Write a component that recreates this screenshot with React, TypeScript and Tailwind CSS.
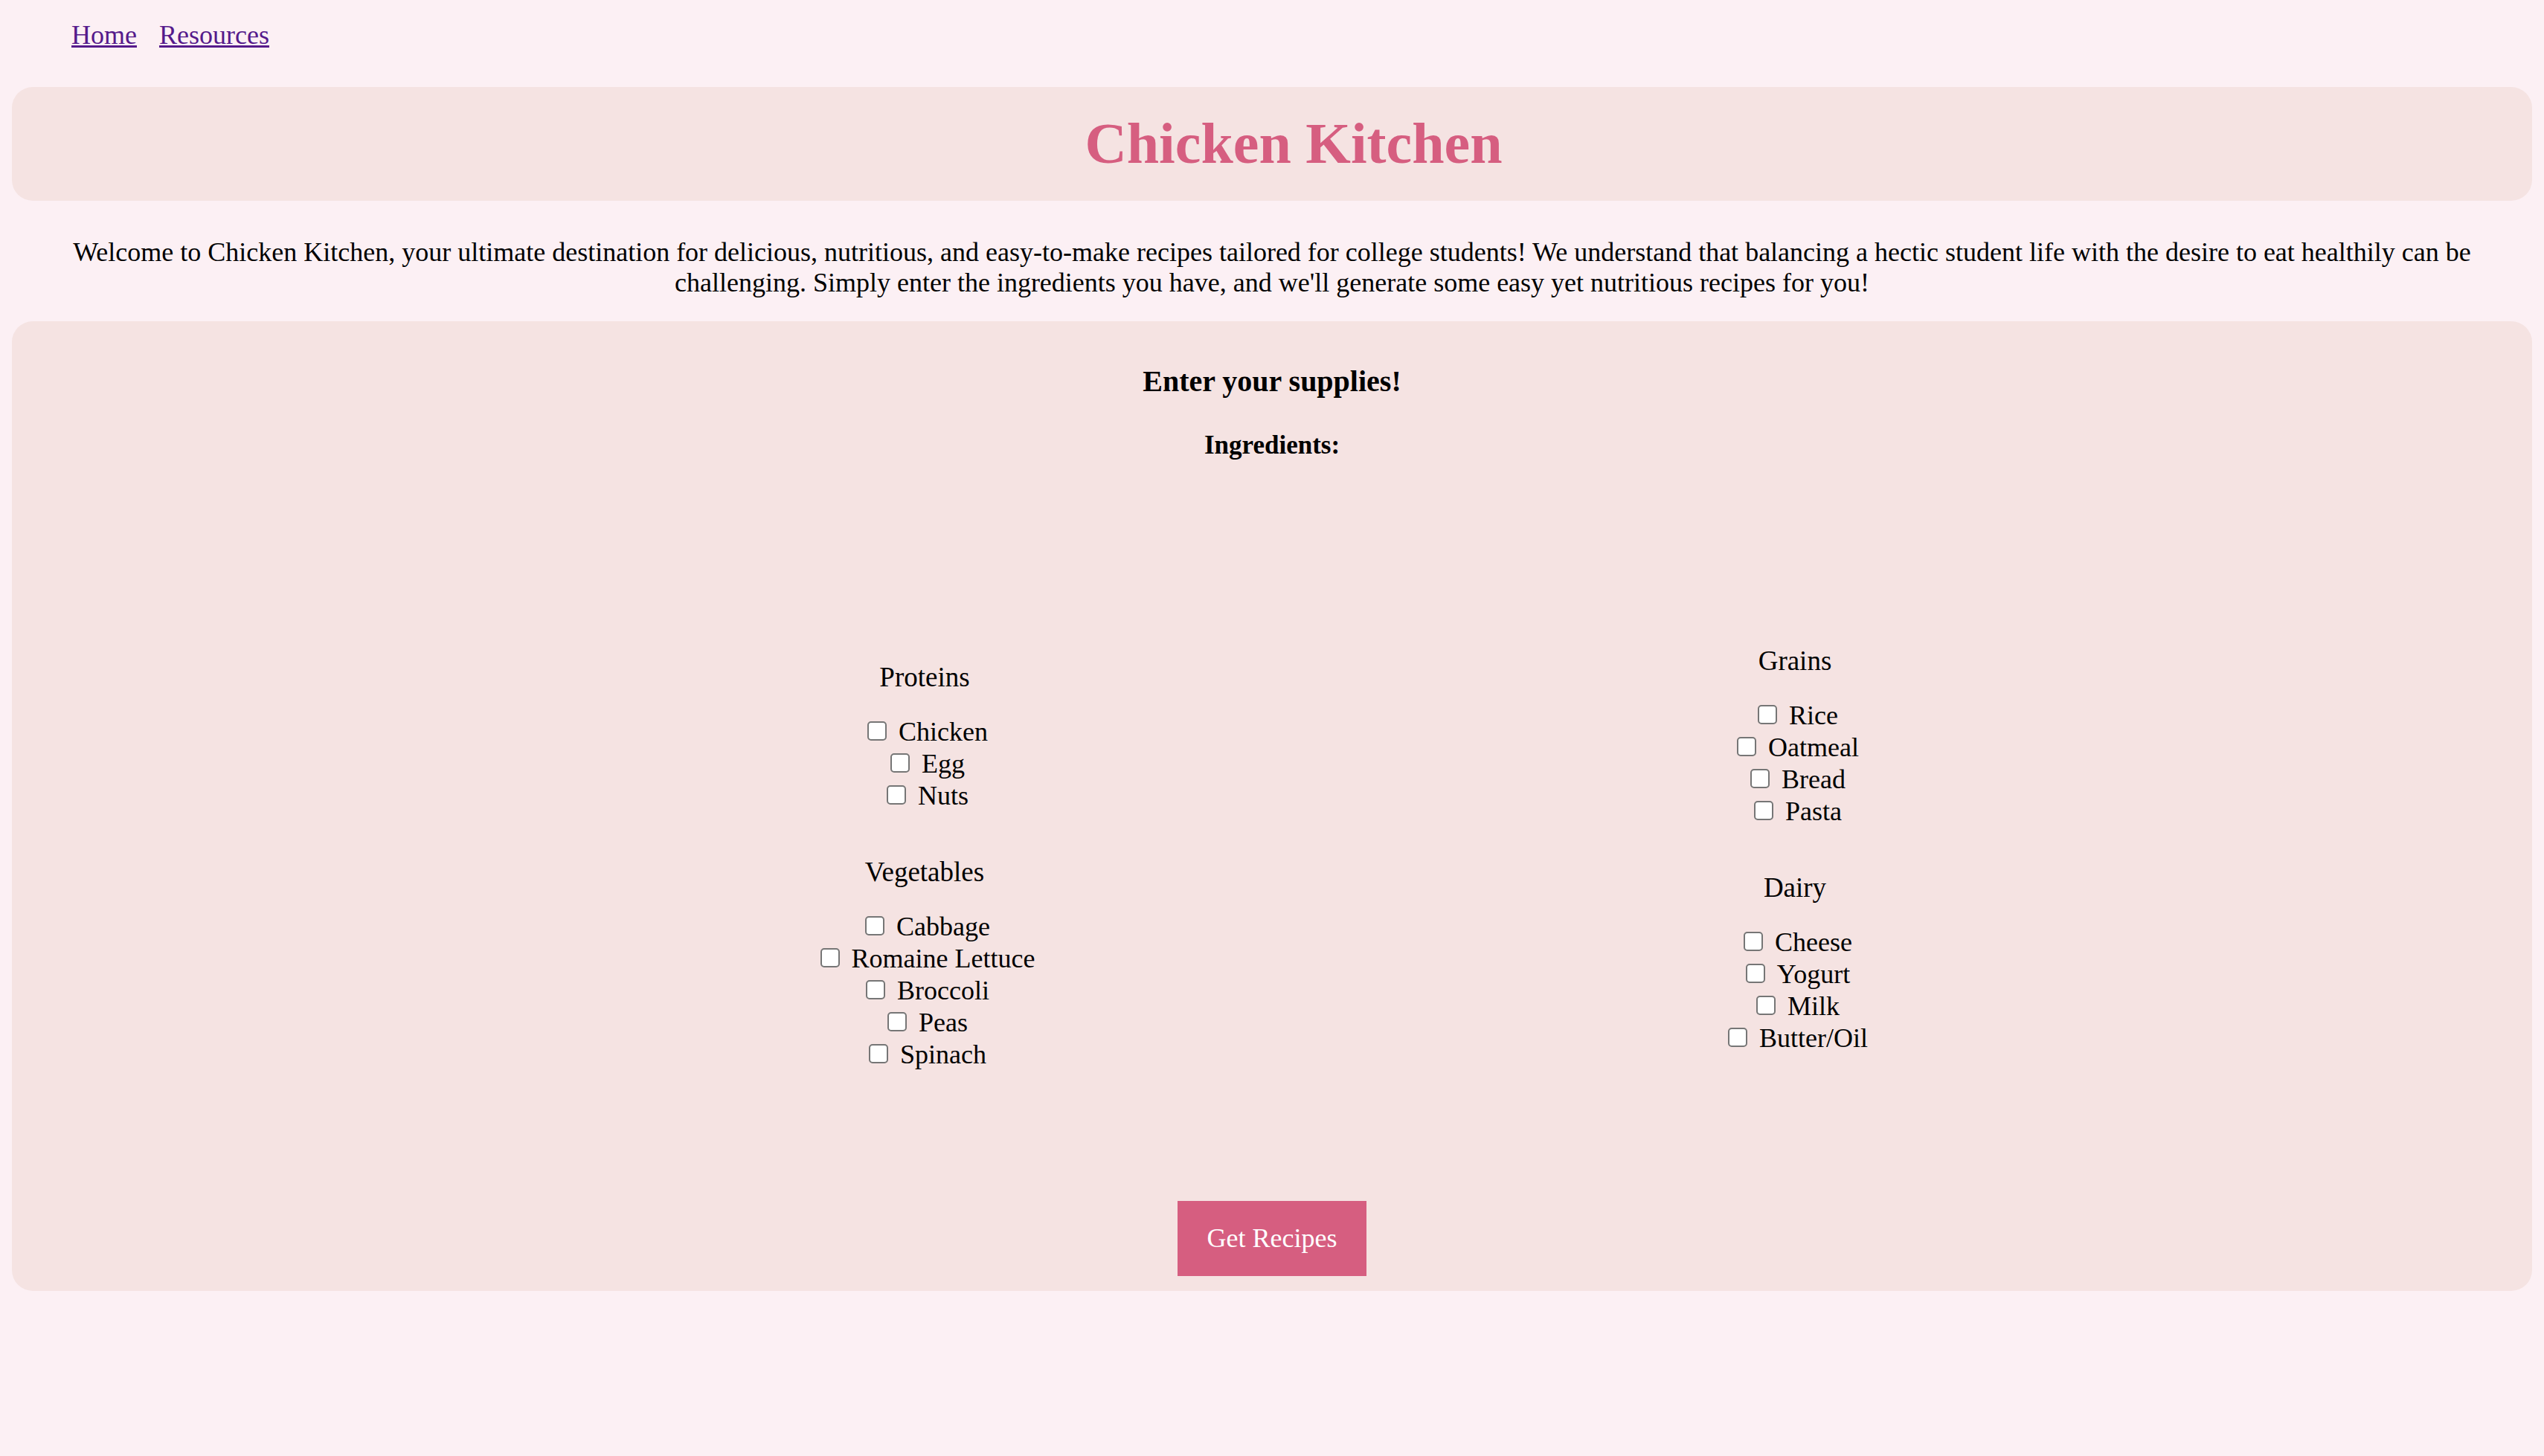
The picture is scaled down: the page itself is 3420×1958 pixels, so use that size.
const groupsLeft = [
  { title: "Proteins", items: ["Chicken", "Egg", "Nuts"] },
  { title: "Vegetables", items: ["Cabbage", "Romaine Lettuce", "Broccoli", "Peas", "Spinach"] },
];

const groupsRight = [
  { title: "Grains", items: ["Rice", "Oatmeal", "Bread", "Pasta"] },
  { title: "Dairy", items: ["Cheese", "Yogurt", "Milk", "Butter/Oil"] },
];

type Group = { title: string; items: string[] };

const Column = ({ groups, offset }: { groups: Group[]; offset?: boolean }) => {
  return (
    <div className={offset ? "flex flex-col items-center pt-[22px]" : "flex flex-col items-center"}>
      {groups.map((g, i) => (
        <div key={g.title} className={i > 0 ? "mt-[60px] text-center" : "text-center"}>
          <h3 className="text-[37px] leading-[42px]">{g.title}</h3>
          <div className="mt-[31px]">
            {g.items.map((item) => (
              <div key={item} className="text-[36px] leading-[43px]">
                <label>
                  <input
                    type="checkbox"
                    className="appearance-none inline-block align-baseline w-[26px] h-[26px] ml-[8px] mr-[16px] border-2 border-[#767676] rounded-[5px] bg-white"
                  />
                  {item}
                </label>
              </div>
            ))}
          </div>
        </div>
      ))}
    </div>
  );
};

const App = () => {
  return (
    <div
      className="min-h-screen bg-[#fcf0f4] text-black"
      style={{ fontFamily: '"Liberation Serif", "Times New Roman", serif' }}
    >
      <nav className="flex gap-[30px] pl-[96px] pt-[27px] text-[36px] leading-[40px]">
        <a href="#" className="underline text-[#551a8b]">Home</a>
        <a href="#" className="underline text-[#551a8b]">Resources</a>
      </nav>

      <header className="mx-[16px] mt-[50px] rounded-[28px] bg-[#f5e3e2] pt-[26px] pb-[27px] pl-[58px]">
        <h1 className="text-center text-[78px] leading-[100px] font-bold text-[#d65e80]">
          Chicken Kitchen
        </h1>
      </header>

      <p className="mt-[49px] px-[96px] text-center text-[36px] leading-[41px]">
        Welcome to Chicken Kitchen, your ultimate destination for delicious, nutritious, and
        easy-to-make recipes tailored for college students! We understand that balancing a hectic
        student life with the desire to eat healthily can be challenging. Simply enter the
        ingredients you have, and we'll generate some easy yet nutritious recipes for you!
      </p>

      <section className="mx-[16px] mt-[31px] rounded-[28px] bg-[#f5e3e2] pt-[58px] pb-[20px] flex flex-col items-center">
        <h2 className="text-[40px] leading-[46px] font-bold">Enter your supplies!</h2>
        <h3 className="mt-[43px] text-[35px] leading-[40px] font-bold">Ingredients:</h3>

        <div className="mt-[249px] w-full grid grid-cols-[600px_600px] gap-x-[570px] justify-center items-start pl-[236px]">
          <Column groups={groupsLeft} offset />
          <Column groups={groupsRight} />
        </div>

        <button className="mt-[175px] w-[254px] h-[101px] flex items-center justify-center bg-[#d65e80] text-white text-[36px] leading-[41px]">
          Get Recipes
        </button>
      </section>
    </div>
  );
};

export default App;
